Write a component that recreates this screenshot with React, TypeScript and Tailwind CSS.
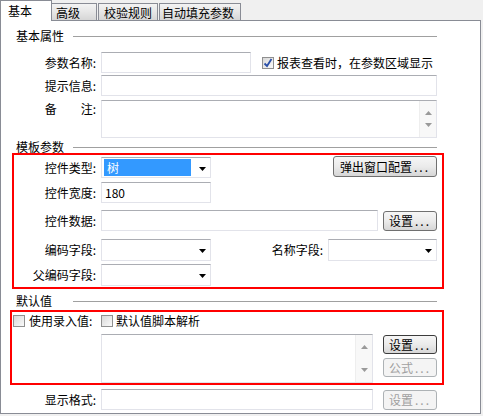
import React from "react";

type Kids = { children?: React.ReactNode };

function Field({ className = "" }: { className?: string }) {
  return <div className={`h-[21px] border border-[#e2e3ea] border-t-[#abadb3] bg-white ${className}`} />;
}

function Combo({ className = "", children }: { className?: string } & Kids) {
  return (
    <div className={`relative flex h-[21px] items-center border border-[#e2e3ea] border-t-[#abadb3] bg-white ${className}`}>
      {children}
      <svg className="absolute right-[4px] top-[9px]" width="7" height="4" viewBox="0 0 7 4">
        <path d="M0 0h7L3.5 4z" fill="#000" />
      </svg>
    </div>
  );
}

function Scroll() {
  return (
    <div className="flex h-full w-[17px] flex-col items-center justify-between border-l border-[#eeeeee] bg-[#f8f8f8] py-[10px]">
      <svg width="7" height="4" viewBox="0 0 7 4">
        <path d="M3.5 0L7 4H0z" fill="#9a9a9a" />
      </svg>
      <svg width="7" height="4" viewBox="0 0 7 4">
        <path d="M0 0h7L3.5 4z" fill="#9a9a9a" />
      </svg>
    </div>
  );
}

function Area({ className = "" }: { className?: string }) {
  return (
    <div className={`flex justify-end border border-[#e2e3ea] border-t-[#abadb3] bg-white ${className}`}>
      <Scroll />
    </div>
  );
}

function Btn({ children, className = "", disabled = false, focus = false }: { className?: string; disabled?: boolean; focus?: boolean } & Kids) {
  const look = disabled
    ? "border-[#adb2b5] bg-[#f4f4f4] text-[#a0a0a0]"
    : focus
    ? "border-[#3c3c3c] bg-gradient-to-b from-[#f6f6f6] via-[#ebebeb] to-[#d6d6d6] text-black"
    : "border-[#707070] bg-gradient-to-b from-[#f6f6f6] via-[#ebebeb] to-[#d6d6d6] text-black";
  return (
    <div className={`flex items-center justify-center rounded-[3px] border ${look} ${className}`}>
      {children}
      <span className="ml-[2px] tracking-[2px]">...</span>
    </div>
  );
}

function Check({ on = false }: { on?: boolean }) {
  return (
    <div className="flex h-[12px] w-[12px] shrink-0 items-center justify-center border border-[#8f8f8f] bg-gradient-to-br from-[#d8d8d8] to-[#fafafa]">
      {on && (
        <svg width="10" height="10" viewBox="0 0 10 10">
          <path d="M1.5 5.5L4 8l4.5-7" fill="none" stroke="#2a4fa8" strokeWidth="1.8" />
        </svg>
      )}
    </div>
  );
}

function Label({ children }: Kids) {
  return <div className="w-[95px] shrink-0 text-right">{children}</div>;
}

function Section({ title }: { title: string }) {
  return (
    <div className="flex h-4 items-center pl-[15px] pr-[43px]">
      <span className="w-[57px] shrink-0">{title}</span>
      <div className="h-px flex-1 bg-[#a0a0a0]" />
    </div>
  );
}

export default function App() {
  return (
    <div className="relative h-[416px] w-[483px] overflow-hidden bg-[#f0f0f0] font-['Noto_Sans_CJK_SC',sans-serif] text-[12px] leading-[14px] text-black">
      {/* tabs */}
      <div className="flex h-[20px] items-start">
        <div className="relative z-10 h-[21px] w-[52px] border border-b-0 border-[#898c95] bg-white pl-[7px] pt-[3px]">基本</div>
        <div className="mt-[3px] h-[17px] w-[45px] border border-b-0 border-l-0 border-[#898c95] bg-gradient-to-b from-[#f3f3f3] via-[#e6e6e6] to-[#d6d6d6] pl-[4px] pt-[2px]">高级</div>
        <div className="ml-px mt-[3px] h-[17px] w-[60px] border border-b-0 border-[#898c95] bg-gradient-to-b from-[#f3f3f3] via-[#e6e6e6] to-[#d6d6d6] pl-[5px] pt-[2px]">校验规则</div>
        <div className="ml-px mt-[3px] h-[17px] w-[82px] border border-b-0 border-[#898c95] bg-gradient-to-b from-[#f3f3f3] via-[#e6e6e6] to-[#d6d6d6] pl-[2px] pt-[2px]">自动填充参数</div>
      </div>

      {/* panel */}
      <div className="flex h-[394px] w-[481px] flex-col border border-[#898c95] bg-white pt-[7px]">
        <Section title="基本属性" />

        <div className="mt-[8px] flex items-center pr-[43px]">
          <Label>参数名称:</Label>
          <Field className="ml-[5px] w-[150px]" />
          <div className="ml-[11px]">
            <Check on />
          </div>
          <span className="ml-[3px]">报表查看时，在参数区域显示</span>
        </div>

        <div className="mt-[2px] flex items-center pr-[43px]">
          <Label>提示信息:</Label>
          <Field className="ml-[5px] flex-1" />
        </div>

        <div className="mt-[4px] flex items-start pr-[43px]">
          <div className="w-[95px] shrink-0 pt-[2px] text-right">备　　注:</div>
          <Area className="ml-[5px] h-[38px] flex-1" />
        </div>

        <div className="mt-px">
          <Section title="模板参数" />
        </div>

        <div className="mt-[2px] flex items-center pr-[43px]">
          <Label>控件类型:</Label>
          <Combo className="ml-[5px] w-[110px]">
            <div className="ml-[2px] flex h-[17px] w-[87px] items-center bg-[#3399ff] pl-[3px] text-white">树</div>
          </Combo>
          <div className="flex-1" />
          <Btn className="-mt-[2px] h-[21px] w-[104px]">弹出窗口配置</Btn>
        </div>

        <div className="mt-[4px] flex items-center pr-[43px]">
          <Label>控件宽度:</Label>
          <div className="ml-[5px] flex h-[21px] w-[110px] items-center border border-[#e2e3ea] border-t-[#abadb3] bg-white pl-[3px]">180</div>
        </div>

        <div className="mt-[7px] flex items-center pr-[43px]">
          <Label>控件数据:</Label>
          <Field className="ml-[5px] flex-1" />
          <Btn className="ml-[5px] h-[20px] w-[54px]">设置</Btn>
        </div>

        <div className="mt-[8px] flex items-center pr-[43px]">
          <Label>编码字段:</Label>
          <Combo className="ml-[5px] h-[22px] w-[110px]" />
          <div className="flex-1 text-right">名称字段:</div>
          <Combo className="ml-[5px] h-[22px] w-[109px]" />
        </div>

        <div className="mt-[3px] flex items-center pr-[43px]">
          <Label>父编码字段:</Label>
          <Combo className="ml-[5px] h-[22px] w-[110px]" />
        </div>

        <div className="mt-[7px]">
          <Section title="默认值" />
        </div>

        <div className="mt-[4px] flex h-4 items-center pl-[12px] pr-[43px]">
          <div className="flex w-[88px] shrink-0 items-center">
            <Check />
            <span className="ml-[4px]">使用录入值:</span>
          </div>
          <Check />
          <span className="ml-[3px]">默认值脚本解析</span>
        </div>

        <div className="mt-[5px] flex items-start pl-[100px] pr-[43px]">
          <Area className="h-[49px] flex-1" />
          <div className="ml-[10px] flex w-[54px] flex-col gap-[4px] pt-px">
            <Btn focus className="h-[19px]">设置</Btn>
            <Btn disabled className="h-[19px]">公式</Btn>
          </div>
        </div>

        <div className="mt-[6px] flex items-center pr-[43px]">
          <Label>显示格式:</Label>
          <Field className="ml-[5px] flex-1" />
          <Btn disabled className="ml-[10px] h-[20px] w-[54px]">设置</Btn>
        </div>
      </div>

      {/* red annotation boxes */}
      <div className="pointer-events-none absolute left-[12px] top-[153px] h-[136px] w-[432px] border-2 border-[#ff0000]" />
      <div className="pointer-events-none absolute left-[10px] top-[310px] h-[75px] w-[434px] border-2 border-[#ff0000]" />
    </div>
  );
}
